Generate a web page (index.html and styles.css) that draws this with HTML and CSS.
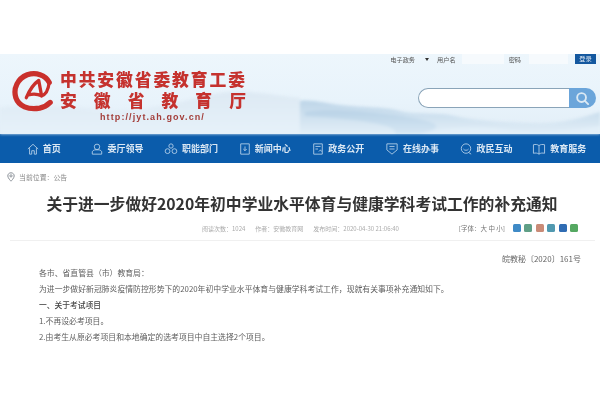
FILE: index.html
```html
<!DOCTYPE html>
<html lang="zh-CN">
<head>
<meta charset="utf-8">
<title>安徽省教育厅</title>
<link rel="stylesheet" href="styles.css">
</head>
<body>
<div class="top-gap"></div>
<header class="header">
  <svg class="hills" viewBox="0 0 600 80" preserveAspectRatio="none" aria-hidden="true">
    <defs>
      <linearGradient id="h1" x1="0" y1="0" x2="0" y2="1"><stop offset="0" stop-color="#bdd5e8"/><stop offset="1" stop-color="#e2eef7"/></linearGradient>
      <linearGradient id="h2" x1="0" y1="0" x2="0" y2="1"><stop offset="0" stop-color="#dde9f3"/><stop offset="1" stop-color="#e6f1f9"/></linearGradient>
      <linearGradient id="h3" x1="0" y1="0" x2="0" y2="1"><stop offset="0" stop-color="#b9d2e6"/><stop offset="1" stop-color="#d6e7f4"/></linearGradient>
    </defs>
    <path fill="url(#h2)" d="M0 54C30 50 60 52 100 56S170 50 205 42 250 38 300 44V80H0Z"/>
    <path fill="url(#h1)" d="M300 47C312 45 325 50 350 52S385 53 400 57 440 58 455 62 500 68 530 69 575 66 600 58V80H300Z"/>
    <path fill="url(#h3)" d="M305 58C330 54 365 58 385 60S425 66 430 68 445 74 420 80H395C400 72 370 66 305 62Z"/>
    <path fill="#e2eff8" d="M420 80C450 72 480 72 510 76S570 76 600 72V80Z"/>
  </svg>
  <div class="brand">
    <svg class="logo" viewBox="0 0 44 44" aria-hidden="true">
      <path fill="none" stroke="#c9302c" stroke-width="5.500" stroke-linecap="round" d="M39 13C35 5 25 2 16 5 6 9 1 19 4 29 7 38 17 42 29 40 34 39 37 37 40 34"/>
      <path fill="none" stroke="#c9302c" stroke-width="3.500" stroke-linecap="round" stroke-linejoin="round" d="M15 29C18 22 22 15 28 11L31 27C27 25 21 25 17 26"/>
      <path fill="none" stroke="#c9302c" stroke-width="3.500" stroke-linecap="round" d="M31 27C35 26 38 21 39 13"/>
    </svg>
    <div class="brand-text">
      <div class="brand-line">中共安徽省委教育工委</div>
      <div class="brand-line brand-wide"><span>安</span><span>徽</span><span>省</span><span>教</span><span>育</span><span>厅</span></div>
      <div class="brand-url">http://jyt.ah.gov.cn/</div>
    </div>
  </div>
  <div class="tools">
    <form class="login">
      <span class="login-select">电子政务</span><span class="login-arrow"></span>
      <span>用户名</span><span class="login-field"></span>
      <span>密码</span><span class="login-field login-field-short"></span>
      <span class="login-btn">登录</span>
    </form>
    <div class="search">
      <span class="search-input"></span>
      <span class="search-btn">
        <svg viewBox="0 0 16 16" class="search-icon" aria-hidden="true"><circle cx="7" cy="7" r="4.700" fill="none" stroke="#dbe9f4" stroke-width="2"/><path d="M10.500 10.500L14 14" stroke="#dbe9f4" stroke-width="2" stroke-linecap="round"/></svg>
      </span>
    </div>
  </div>
</header>
<nav class="nav">
  <a class="nav-item"><svg class="nav-icon" viewBox="0 0 14 14"><path d="M1 7L7 1.500 13 7M3 6V13H5.500V9H8.500V13H11V6"/></svg>首页</a>
  <a class="nav-item"><svg class="nav-icon" viewBox="0 0 14 14"><circle cx="7" cy="4.500" r="3.200"/><path d="M1.500 13V10.500C1.500 9 3 8.500 4.500 8H9.500C11 8.500 12.500 9 12.500 10.500V13Z"/></svg>委厅领导</a>
  <a class="nav-item"><svg class="nav-icon nav-icon-wide" viewBox="0 0 16 14"><circle cx="8" cy="3.500" r="2.500"/><circle cx="4" cy="9.500" r="2.800"/><circle cx="12" cy="9.500" r="2.800"/></svg>职能部门</a>
  <a class="nav-item"><svg class="nav-icon" viewBox="0 0 14 14"><path d="M2 1H12V13H2ZM7 4V9M5 7L7 9 9 7"/></svg>新闻中心</a>
  <a class="nav-item"><svg class="nav-icon" viewBox="0 0 14 14"><path d="M2 1H12V13H2ZM4 4H10M4 7H7M8 10L10 8 11 10"/></svg>政务公开</a>
  <a class="nav-item"><svg class="nav-icon nav-icon-wide" viewBox="0 0 16 14"><path d="M2 1H14V8L8 13 2 8ZM5 4H11M5 7H11"/></svg>在线办事</a>
  <a class="nav-item"><svg class="nav-icon nav-icon-wide" viewBox="0 0 16 14"><circle cx="8" cy="6.500" r="5.500"/><path d="M5 7C6 9 10 9 11 7M11 11L14 13"/></svg>政民互动</a>
  <a class="nav-item"><svg class="nav-icon nav-icon-wide" viewBox="0 0 16 14"><path d="M8 3C6 1.500 4 1.500 1.500 2V12C4 11.500 6 11.500 8 13 10 11.500 12 11.500 14.500 12V2C12 1.500 10 1.500 8 3ZM8 3V13"/></svg>教育服务</a>
</nav>
<div class="crumb">
  <svg class="pin" viewBox="0 0 8 10" aria-hidden="true"><path d="M4 .8C2 .8.800 2.200.800 4 .800 6 4 9.200 4 9.200S7.200 6 7.200 4C7.200 2.200 6 .8 4 .8Z"/><circle cx="4" cy="3.900" r="1.100"/></svg>
  <span>当前位置：公告</span>
</div>
<main class="article">
  <h1 class="title">关于进一步做好2020年初中学业水平体育与健康学科考试工作的补充通知</h1>
  <div class="meta">
    <div class="meta-info">
      <span>阅读次数：1024</span><span>作者：安徽教育网</span><span>发布时间：2020-04-30 21:06:40</span>
    </div>
    <div class="meta-tools">
      <span class="font-size">[字体：大 中 小]</span>
      <span class="share">
        <i class="s s1"></i><i class="s s2"></i><i class="s s3"></i><i class="s s4"></i><i class="s s5"></i><i class="s s6"></i>
      </span>
    </div>
  </div>
  <div class="doc-no">皖教秘〔2020〕161号</div>
  <div class="body">
    <p>各市、省直管县（市）教育局：</p>
    <p>为进一步做好新冠肺炎疫情防控形势下的2020年初中学业水平体育与健康学科考试工作，现就有关事项补充通知如下。</p>
    <p class="sub">一、关于考试项目</p>
    <p>1.不再设必考项目。</p>
    <p>2.由考生从原必考项目和本地确定的选考项目中自主选择2个项目。</p>
  </div>
</main>
</body>
</html>
```
FILE: styles.css
```css
* { box-sizing: border-box; }
html, body { margin: 0; padding: 0; }
body {
  width: 600px;
  height: 400px;
  overflow: hidden;
  background: #fff;
  font-family: "Noto Sans CJK SC", "Liberation Sans", sans-serif;
  color: #555;
}
.top-gap { height: 54px; background: #fff; }

.header {
  position: relative;
  height: 80px;
  display: flex;
  justify-content: space-between;
  background: linear-gradient(180deg, #edf6fc 0%, #e8f3fb 60%, #e2eef7 100%);
}
.hills { position: absolute; left: 0; top: 0; width: 100%; height: 100%; filter: blur(1.500px); }

.brand { position: relative; display: flex; align-items: flex-start; padding: 15px 0 0 12px; filter: blur(.45px); }
.logo { width: 42px; height: 44px; margin: 0 6px 0 0; }
.brand-text { width: 186px; color: #c5322e; font-weight: 900; }
.brand-line { font-size: 16.800px; line-height: 21px; letter-spacing: 1.900px; white-space: nowrap; }
.brand-wide { display: flex; justify-content: space-between; letter-spacing: 0; }
.brand-url { margin-top: 1px; padding-left: 40px; font: 700 9px/11px "Liberation Sans", sans-serif; color: #a33e3a; letter-spacing: 1.100px; }

.tools { position: relative; display: flex; flex-direction: column; align-items: flex-end; padding: 0 4px 0 0; }
.login { display: flex; align-items: center; height: 10px; font-size: 6.200px; color: #555; filter: blur(.45px); }
.login-select { margin-right: 10px; }
.login-arrow { width: 0; height: 0; margin-right: 8px; border: 2px solid transparent; border-top: 3px solid #333; border-bottom: 0; }
.login-field { width: 42px; height: 10px; margin: 0 5px 0 6px; background: #f6fafd; }
.login-field-short { width: 39px; margin: 0 7px 0 8px; }
.login-btn { width: 21px; height: 10px; background: #14589f; color: #dfe9f3; text-align: center; line-height: 10px; }

.search { display: flex; height: 20px; width: 178px; margin-top: 24px; padding: 0; }
.search-input { flex: 1; background: #fff; border: 1.500px solid #8aa4b8; border-right: 0; border-radius: 10px 0 0 10px; }
.search-btn { display: flex; align-items: center; justify-content: center; width: 27px; background: #6ba5da; border-radius: 0 10px 10px 0; }
.search-icon { width: 15px; height: 15px; }

.nav {
  display: grid;
  grid-template-columns: repeat(8, 1fr);
  height: 29px;
  padding: 0 4px 0 7px;
  background: #0b5cab;
}
.nav-item {
  display: flex;
  align-items: center;
  justify-content: center;
  gap: 4px;
  font-size: 9px;
  font-weight: 700;
  color: #dbe8f4;
  white-space: nowrap;
  filter: blur(.4px);
}
.nav-icon { width: 12px; height: 12px; fill: none; stroke: #b9d3ea; stroke-width: 1; }
.nav-icon-wide { width: 14px; }

.crumb { display: flex; align-items: center; gap: 4px; height: 27px; padding: 0 0 0 7px; font-size: 6.900px; color: #888; filter: blur(.4px); }
.pin { width: 8px; height: 10px; fill: none; stroke: #8a9097; stroke-width: 1; }

.article { padding: 0 19px 0 0; }
.title { margin: 0; height: 29px; font-size: 15.800px; line-height: 28px; font-weight: 700; text-align: center; color: #333; white-space: nowrap; padding-left: 23px; filter: blur(.35px); }
.meta {
  display: flex;
  align-items: center;
  height: 22px;
  margin: 0 -14px 0 10px;
  padding: 0 17px 3px 192px;
  border-bottom: 1px solid #f0f0f0;
  font-size: 6px;
  color: #aaa;
  filter: blur(.4px);
}
.meta-info { display: flex; gap: 10px; white-space: nowrap; }
.meta-tools { display: flex; align-items: center; margin-left: auto; gap: 8px; }
.font-size { color: #777; font-size: 6.500px; white-space: nowrap; }
.share { display: flex; gap: 3.400px; }
.s { display: block; width: 8px; height: 8px; border-radius: 1.500px; }
.s1 { background: #3f8ac6; }
.s2 { background: #5f9f86; }
.s3 { background: #c98b77; }
.s4 { background: #5199b0; }
.s5 { background: #2f6cb3; }
.s6 { background: #55a862; }

.doc-no { margin-top: 12px; text-align: right; font-size: 8px; line-height: 12px; color: #666; filter: blur(.4px); }
.body { padding: 0 0 0 39px; font-size: 7.850px; filter: blur(.4px); }
.body p { margin: 0; height: 16px; line-height: 15px; white-space: nowrap; color: #5e5e5e; }
.body .sub { font-size: 7.750px; color: #444; font-weight: 500; }
```
